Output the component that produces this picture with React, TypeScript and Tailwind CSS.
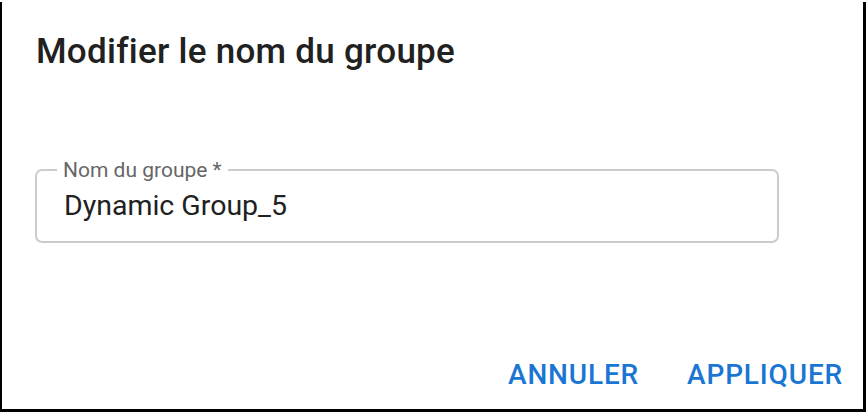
import React from 'react';

const font = { fontFamily: "Roboto, 'Liberation Sans', sans-serif" };

const App: React.FC = () => {
    return (
        <div className="w-[866px] h-[412px] bg-black" style={font}>
            <div className="ml-[2px] mt-[2px] w-[861px] h-[407px] bg-white flex flex-col">
                <h2 className="pl-[34px] pt-[26px] text-[35px] leading-[48px] font-medium text-[#212121] tracking-[0.0075em]">
                    Modifier le nom du groupe
                </h2>

                <div className="px-[33px] pt-[93px]">
                    <div className="relative w-[744px] h-[74px] border-2 border-[#cccccc] rounded-[7px] flex items-center">
                        <span className="absolute left-[20px] top-[-1px] -translate-y-1/2 bg-white px-[6px] text-[21px] leading-[24px] text-[#666666]">
                            Nom du groupe *
                        </span>
                        <input
                            readOnly
                            value="Dynamic Group_5"
                            className="w-full pl-[27px] pr-[20px] text-[28.5px] leading-[34px] text-[#212121] outline-none bg-transparent"
                        />
                    </div>
                </div>

                <div className="mt-auto flex justify-end items-center gap-[48px] pr-[20px] pb-[14px]">
                    <button className="text-[28px] leading-[40px] font-medium uppercase tracking-[0.03em] text-[#1976d2]">
                        Annuler
                    </button>
                    <button className="text-[28px] leading-[40px] font-medium uppercase tracking-[0.03em] text-[#1976d2]">
                        Appliquer
                    </button>
                </div>
            </div>
        </div>
    );
};

export default App;
